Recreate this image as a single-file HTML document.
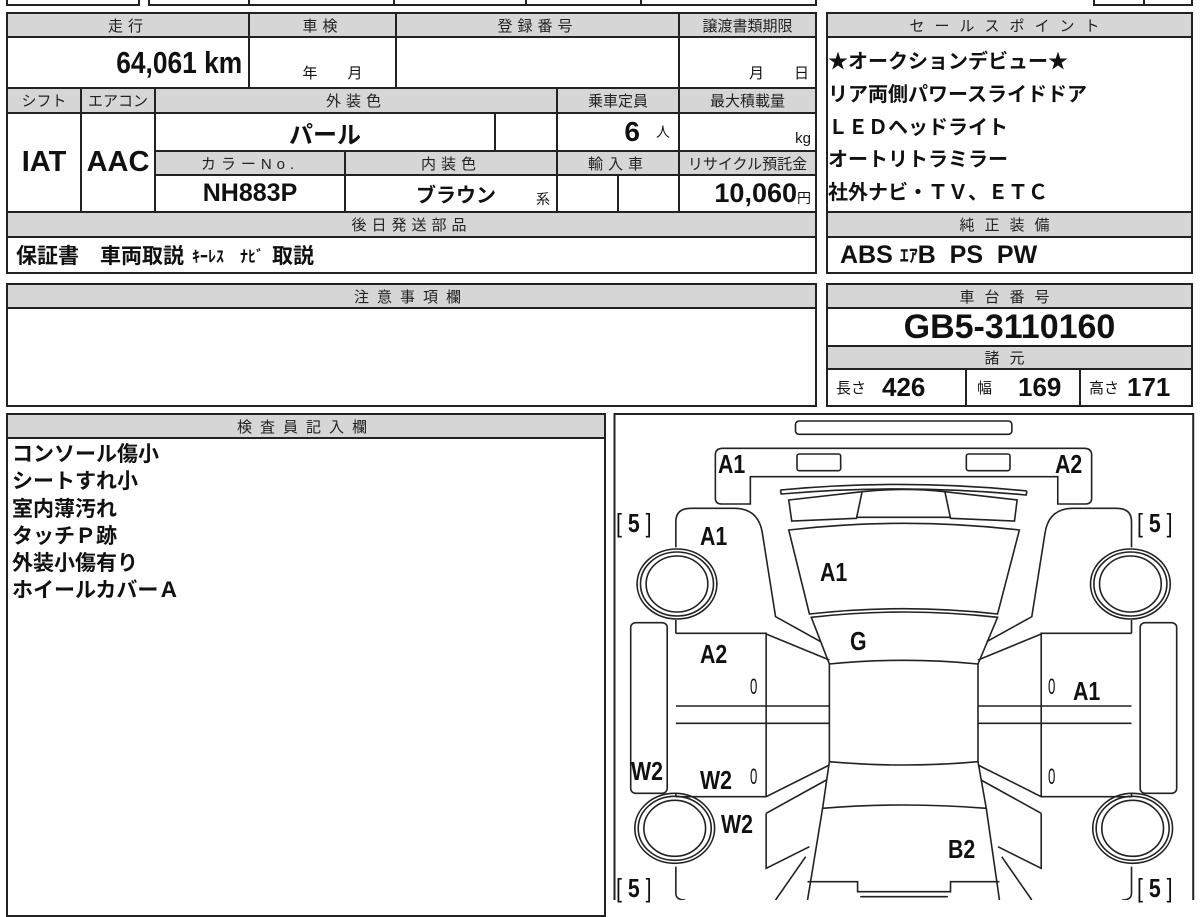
<!DOCTYPE html>
<html><head><meta charset="utf-8">
<style>
body{margin:0;width:1200px;height:900px;background:#fff;position:relative;overflow:hidden;font-family:"Liberation Sans","Noto Sans CJK JP",sans-serif;color:#111}
.c{position:absolute;border:2px solid #222;box-sizing:border-box;display:flex;align-items:center;justify-content:center;white-space:nowrap}
.g{background:#d6d6d6;font-size:15px;letter-spacing:5px;color:#222}
.b{font-weight:bold;font-family:"Liberation Sans Narrow","Liberation Sans","Noto Sans CJK JP",sans-serif}
.t{position:absolute;white-space:nowrap}
.l{position:absolute;font-weight:bold;font-size:26px;font-family:"Liberation Sans",sans-serif;line-height:1;transform:scaleX(0.82);transform-origin:left top}
.z{font-weight:normal;font-size:22px;transform:scaleX(0.6)}
.k{font-family:"Noto Sans CJK JP","Liberation Sans",sans-serif;font-weight:bold}
.n{display:inline-block;transform:scaleX(0.85);transform-origin:right center}
</style></head><body>
<!-- top strip -->
<div class="c" style="left:6px;top:-20px;width:134px;height:26px"></div>
<div class="c" style="left:148px;top:-20px;width:669px;height:26px"></div>
<div class="c" style="left:248px;top:-20px;width:147px;height:26px"></div>
<div class="c" style="left:393px;top:-20px;width:134px;height:26px"></div>
<div class="c" style="left:525px;top:-20px;width:117px;height:26px"></div>
<div class="c" style="left:1093px;top:-20px;width:100px;height:26px"></div>
<div class="c" style="left:1143px;top:-20px;width:50px;height:26px"></div>

<!-- left table -->
<div class="c g" style="left:6px;top:12px;width:244px;height:26px">走行</div>
<div class="c g" style="left:248px;top:12px;width:149px;height:26px">車検</div>
<div class="c g" style="left:395px;top:12px;width:285px;height:26px">登録番号</div>
<div class="c g" style="left:678px;top:12px;width:139px;height:26px;letter-spacing:0">譲渡書類期限</div>
<div class="c b" style="left:6px;top:36px;width:244px;height:53px;justify-content:flex-end;padding-right:6px;font-size:31px"><span class="n">64,061 km</span></div>
<div class="c" style="left:248px;top:36px;width:149px;height:53px;align-items:flex-end;font-size:15px;padding-bottom:4px"><span style="margin-left:20px">年　　月</span></div>
<div class="c" style="left:395px;top:36px;width:285px;height:53px"></div>
<div class="c" style="left:678px;top:36px;width:139px;height:53px;align-items:flex-end;justify-content:flex-end;font-size:15px;padding:0 6px 4px 0">月　　日</div>

<div class="c g" style="left:6px;top:87px;width:76px;height:27px;letter-spacing:0">シフト</div>
<div class="c g" style="left:80px;top:87px;width:76px;height:27px;letter-spacing:0">エアコン</div>
<div class="c g" style="left:154px;top:87px;width:404px;height:27px">外装色</div>
<div class="c g" style="left:556px;top:87px;width:124px;height:27px;letter-spacing:0">乗車定員</div>
<div class="c g" style="left:678px;top:87px;width:139px;height:27px;letter-spacing:0">最大積載量</div>

<div class="c b" style="left:6px;top:112px;width:76px;height:101px;font-size:29px">IAT</div>
<div class="c b" style="left:80px;top:112px;width:76px;height:101px;font-size:29px">AAC</div>
<div class="c k" style="left:154px;top:112px;width:342px;height:40px;font-size:24px">パール</div>
<div class="c" style="left:494px;top:112px;width:64px;height:40px"></div>
<div class="c" style="left:556px;top:112px;width:124px;height:40px;justify-content:flex-end;padding-right:8px"><b class="b" style="font-size:28px">6</b><span style="font-size:14px;margin-left:16px">人</span></div>
<div class="c" style="left:678px;top:112px;width:139px;height:40px;justify-content:flex-end;padding-right:4px;align-items:flex-end;font-size:15px;padding-bottom:3px">kg</div>

<div class="c g" style="left:154px;top:150px;width:192px;height:26px">カラーNo.</div>
<div class="c g" style="left:344px;top:150px;width:214px;height:26px">内装色</div>
<div class="c g" style="left:556px;top:150px;width:124px;height:26px">輸入車</div>
<div class="c g" style="left:678px;top:150px;width:139px;height:26px;letter-spacing:0">リサイクル預託金</div>

<div class="c b" style="left:154px;top:174px;width:192px;height:39px;font-size:25px">NH883P</div>
<div class="c" style="left:344px;top:174px;width:214px;height:39px"><span class="k" style="font-size:20px;margin-left:10px">ブラウン</span><span style="position:absolute;right:6px;bottom:2px;font-size:14px">系</span></div>
<div class="c" style="left:556px;top:174px;width:63px;height:39px"></div>
<div class="c" style="left:617px;top:174px;width:63px;height:39px"></div>
<div class="c" style="left:678px;top:174px;width:139px;height:39px;justify-content:flex-end;padding-right:4px"><b class="b" style="font-size:27px">10,060</b><span style="font-size:14px;margin-top:8px">円</span></div>

<div class="c g" style="left:6px;top:211px;width:811px;height:27px">後日発送部品</div>
<div class="c k" style="left:6px;top:236px;width:811px;height:38px;justify-content:flex-start;padding-left:8px;font-size:21px">保証書　車両取説 <span style="font-size:16px;margin:0 8px">ｷｰﾚｽ　ﾅﾋﾞ</span>取説</div>

<!-- right panel -->
<div class="c g" style="left:826px;top:12px;width:367px;height:26px;letter-spacing:10px">セールスポイント</div>
<div class="c" style="left:826px;top:36px;width:367px;height:177px"></div>
<div class="t k" style="left:828px;top:44px;font-size:20px;line-height:32.8px">★オークションデビュー★<br>リア両側パワースライドドア<br>ＬＥＤヘッドライト<br>オートリトラミラー<br>社外ナビ・ＴＶ、ＥＴＣ</div>
<div class="c g" style="left:826px;top:211px;width:367px;height:27px;letter-spacing:10px">純正装備</div>
<div class="c b" style="left:826px;top:236px;width:367px;height:38px;justify-content:flex-start;padding-left:12px;font-size:25px">ABS&nbsp; <span class="k" style="font-size:18px">ｴｱ</span>B&nbsp; PS&nbsp; PW</div>

<div class="c g" style="left:826px;top:283px;width:367px;height:26px;letter-spacing:10px">車台番号</div>
<div class="c b" style="left:826px;top:307px;width:367px;height:40px;font-size:34px">GB5-3110160</div>
<div class="c g" style="left:826px;top:345px;width:367px;height:25px;letter-spacing:10px">諸元</div>
<div class="c" style="left:826px;top:368px;width:141px;height:39px;justify-content:flex-start;padding-left:8px"><span style="font-size:15px">長さ</span><b class="b" style="font-size:26px;margin-left:16px">426</b></div>
<div class="c" style="left:965px;top:368px;width:116px;height:39px;justify-content:flex-start;padding-left:10px"><span style="font-size:15px">幅</span><b class="b" style="font-size:26px;margin-left:26px">169</b></div>
<div class="c" style="left:1079px;top:368px;width:114px;height:39px;justify-content:flex-start;padding-left:8px"><span style="font-size:15px">高さ</span><b class="b" style="font-size:26px;margin-left:8px">171</b></div>

<!-- notes -->
<div class="c g" style="left:6px;top:283px;width:811px;height:26px;letter-spacing:8px">注意事項欄</div>
<div class="c" style="left:6px;top:307px;width:811px;height:100px"></div>

<div class="c g" style="left:6px;top:413px;width:600px;height:26px;letter-spacing:8px">検査員記入欄</div>
<div class="c" style="left:6px;top:437px;width:600px;height:480px"></div>
<div class="t k" style="left:12px;top:440px;font-size:21px;line-height:27.3px">コンソール傷小<br>シートすれ小<br>室内薄汚れ<br>タッチＰ跡<br>外装小傷有り<br>ホイールカバーＡ</div>

<!-- diagram -->
<svg style="position:absolute;left:610px;top:410px" width="590" height="490" viewBox="0 0 1568 1470" preserveAspectRatio="none">
<g fill="none" stroke="#222" stroke-width="1.6" vector-effect="non-scaling-stroke">
<rect x="12" y="12" width="1538" height="1500" stroke-width="2" vector-effect="non-scaling-stroke"/>
<rect x="493" y="33" width="575" height="40" rx="10" vector-effect="non-scaling-stroke"/>
<path d="M300 115 H1260 Q1280 115 1280 135 V265 Q1280 282 1262 282 H1190 V200 H373 V282 H298 Q280 282 280 265 V135 Q280 115 300 115 Z" vector-effect="non-scaling-stroke"/>
<rect x="497" y="132" width="116" height="50" rx="6" vector-effect="non-scaling-stroke"/>
<rect x="947" y="132" width="116" height="50" rx="6" vector-effect="non-scaling-stroke"/>
<path d="M453 240 Q780 205 1108 243 M453 240 L455 252 Q780 220 1106 255 L1108 243" vector-effect="non-scaling-stroke"/>
<path d="M475 270 L670 245 L655 325 L483 333 Z M890 245 L1082 270 L1075 333 L905 325 Z M670 245 Q780 232 890 245 M655 322 L905 322" vector-effect="non-scaling-stroke"/>
<path d="M475 360 Q780 320 1088 360 L1030 612 Q780 580 530 612 Z" vector-effect="non-scaling-stroke"/>
<path d="M535 622 Q780 590 1030 622 L978 762 Q780 740 583 762 Z" vector-effect="non-scaling-stroke"/>
<path d="M583 762 V1055 Q780 1075 978 1055 V762" vector-effect="non-scaling-stroke"/>
<path d="M583 1055 L565 1195 Q780 1175 1000 1195 L978 1055" vector-effect="non-scaling-stroke"/>
<path d="M565 1195 L525 1470 M1000 1195 L1035 1470" vector-effect="non-scaling-stroke"/>
<path d="M525 1415 H658 V1445 H905 V1415 H1035 M665 1460 H898" vector-effect="non-scaling-stroke"/>
<g id="side">
<path d="M175 412 V335 Q175 295 215 295 H330 Q395 295 405 370 L440 620 L560 695 M415 672 L583 750 M175 670 H415 V1160 M175 888 H583 M175 940 H583 M175 1160 H415 L583 1065 M415 1210 L575 1110 M415 1210 V1375 L530 1310 M175 1370 V1450 Q175 1470 200 1470 M175 630 V670 M175 1160 V1150 M520 1340 L440 1470" vector-effect="non-scaling-stroke"/>
<ellipse cx="178" cy="522" rx="106" ry="105" vector-effect="non-scaling-stroke"/>
<ellipse cx="178" cy="522" rx="97" ry="96" vector-effect="non-scaling-stroke"/>
<ellipse cx="178" cy="522" rx="82" ry="84" vector-effect="non-scaling-stroke"/>
<ellipse cx="172" cy="1255" rx="106" ry="105" vector-effect="non-scaling-stroke"/>
<ellipse cx="172" cy="1255" rx="97" ry="96" vector-effect="non-scaling-stroke"/>
<ellipse cx="172" cy="1255" rx="82" ry="84" vector-effect="non-scaling-stroke"/>
<rect x="55" y="638" width="97" height="512" rx="14" vector-effect="non-scaling-stroke"/>
</g>
<use href="#side" transform="translate(1561,0) scale(-1,1)"/>
</g>
</svg>
<div class="l" style="left:718px;top:451px">A1</div>
<div class="l" style="left:1055px;top:451px">A2</div>
<div class="l" style="left:616px;top:510px;font-weight:normal">[ <b>5</b> ]</div>
<div class="l" style="left:1137px;top:510px;font-weight:normal">[ <b>5</b> ]</div>
<div class="l" style="left:616px;top:875px;font-weight:normal">[ <b>5</b> ]</div>
<div class="l" style="left:1137px;top:875px;font-weight:normal">[ <b>5</b> ]</div>
<div class="l" style="left:700px;top:523px">A1</div>
<div class="l" style="left:820px;top:559px">A1</div>
<div class="l" style="left:850px;top:628px">G</div>
<div class="l" style="left:700px;top:641px">A2</div>
<div class="l z" style="left:750px;top:676px">0</div>
<div class="l z" style="left:1048px;top:676px">0</div>
<div class="l" style="left:1073px;top:678px">A1</div>
<div class="l" style="left:631px;top:758px">W2</div>
<div class="l" style="left:700px;top:767px">W2</div>
<div class="l z" style="left:750px;top:766px">0</div>
<div class="l z" style="left:1048px;top:766px">0</div>
<div class="l" style="left:721px;top:811px">W2</div>
<div class="l" style="left:948px;top:836px">B2</div>
</body></html>
